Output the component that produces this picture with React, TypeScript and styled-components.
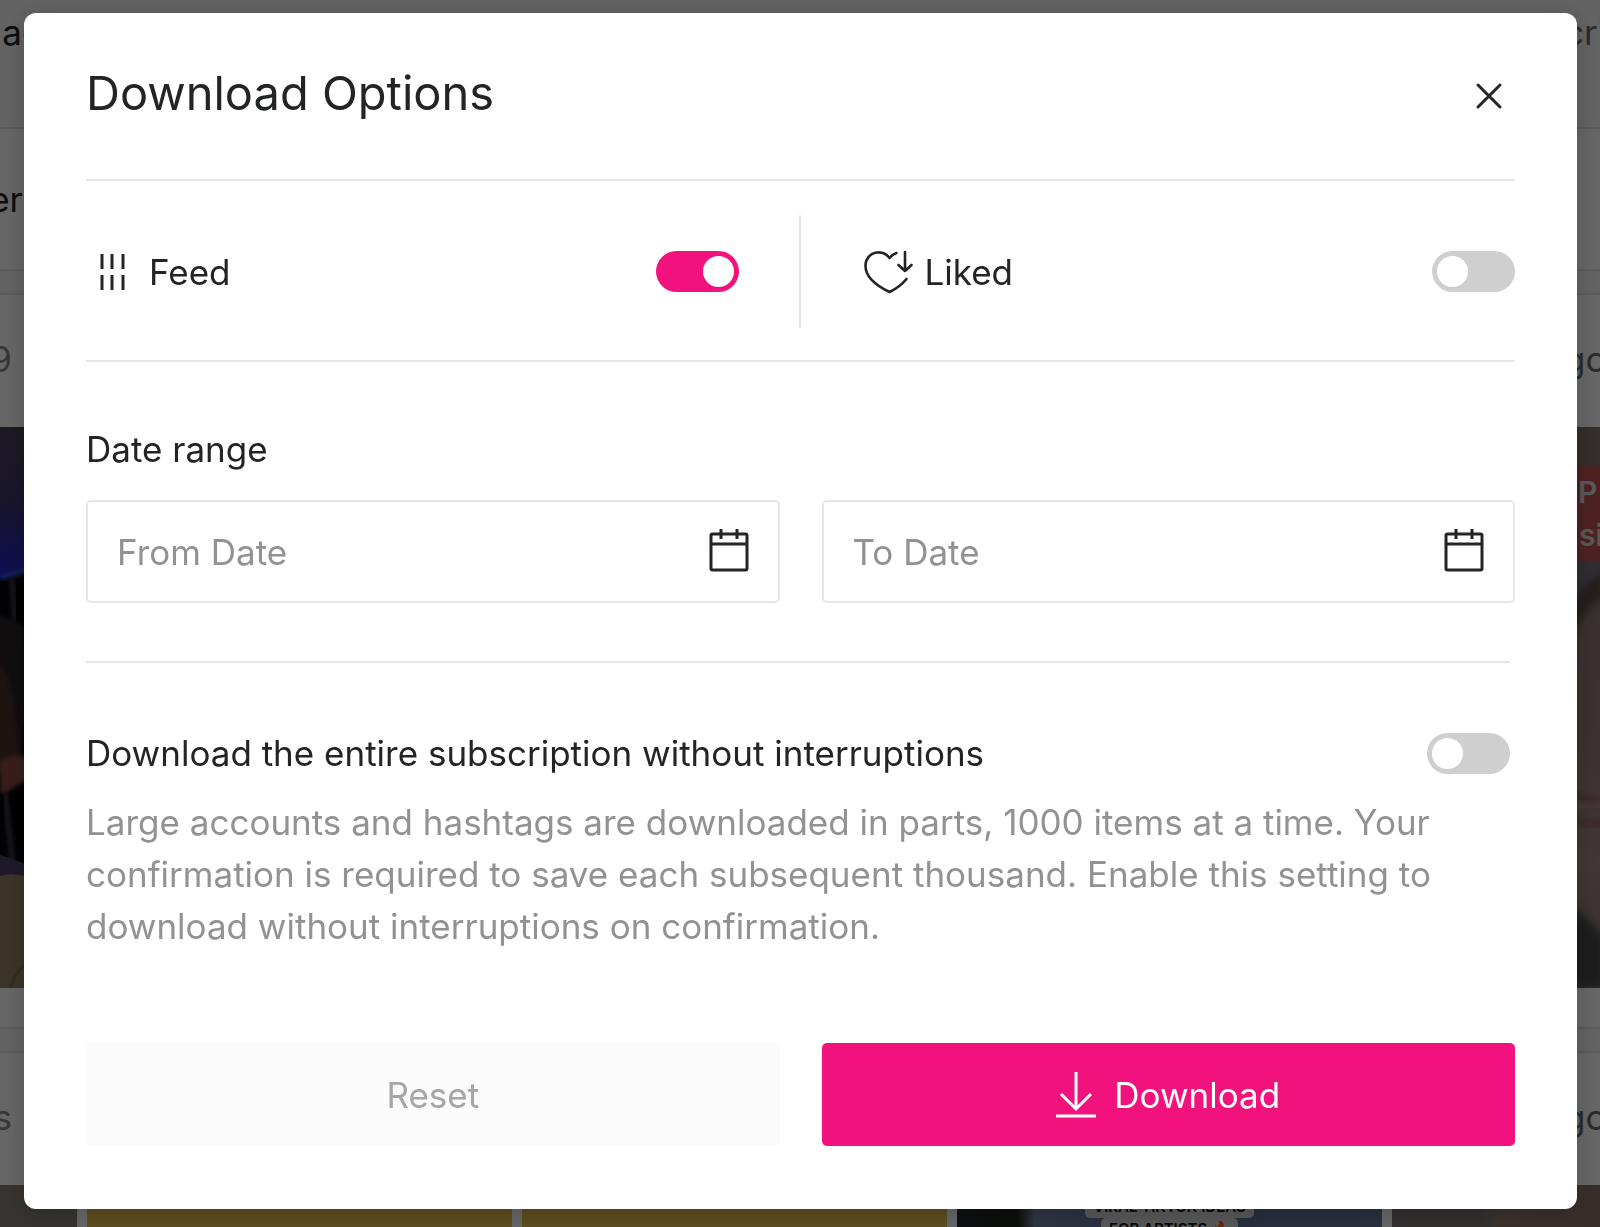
import React, { useState } from "react";
import styled, { createGlobalStyle, css } from "styled-components";

const ink = "#222425";
const muted = "#929292";
const line = "#e6e6e6";
const pink = "#f2127d";

const GlobalStyle = createGlobalStyle`
  *, *::before, *::after { box-sizing: border-box; }
  html, body, #root { height: 100%; }
  body {
    margin: 0;
    overflow: hidden;
    color: ${ink};
    font-family: Inter, "Liberation Sans", sans-serif;
    font-size: 35px;
    line-height: 52px;
  }
  button, input { font: inherit; color: inherit; }
  h1, h2, p { margin: 0; font-weight: 400; }
`;

/* ---------- page behind the dialog ---------- */

const Page = styled.div`
  height: 100vh;
  overflow: hidden;
  background: #f7f7f7;
`;

const Bar = styled.div<{ $height: number; $tone?: string }>`
  display: flex;
  justify-content: space-between;
  align-items: center;
  height: ${(p) => p.$height}px;
  border-bottom: 2px solid #e2e2e2;
  background: ${(p) => p.$tone ?? "#fff"};
`;

const TopBar = styled(Bar)`
  align-items: flex-start;
  padding-top: 6px;
`;

const LeftText = styled.span<{ $width: number; $soft?: boolean }>`
  display: flex;
  justify-content: flex-end;
  width: ${(p) => p.$width}px;
  color: ${(p) => (p.$soft ? "#8a8a8a" : ink)};
`;

const RightText = styled.span`
  width: 36px;
  white-space: nowrap;
  color: #666a70;
`;

const Card = styled.section`
  margin-top: 22px;
  border-top: 2px solid #e2e2e2;
  background: #fff;
`;

const CardHead = styled.div`
  display: flex;
  justify-content: space-between;
  align-items: center;
  height: 132px;
  padding-bottom: 4px;
`;

const Photos = styled.div<{ $wide?: boolean }>`
  display: grid;
  grid-template-columns: ${(p) => (p.$wide ? "1fr 1fr" : "77px repeat(3, 425px) 1fr")};
  gap: 10px;
  height: 561px;
  svg { display: block; width: 100%; height: 561px; }
`;

const CardFoot = styled.div`
  height: 41px;
  border-bottom: 2px solid #e2e2e2;
`;

const Swatch = styled.div<{ $fill: string }>`
  background: ${(p) => p.$fill};
`;

const Poster = styled.div`
  display: flex;
  flex-direction: column;
  align-items: center;
  padding-top: 11px;
  background: linear-gradient(90deg, #222b2e 0, #1c2218 60px, #7486a8 78px, #5e7197 45%, #64789c 100%);
`;

const PosterLine = styled.span`
  padding: 0 8px;
  border-radius: 5px;
  background: #dadada;
  color: #111;
  font-size: 15px;
  font-weight: 600;
  line-height: 22px;
`;

const Concert = () => (
  <svg viewBox="0 0 795 561" preserveAspectRatio="xMinYMin slice" aria-hidden="true">
    <defs>
      <linearGradient id="stage" x1="0" y1="0" x2="0" y2="1">
        <stop offset="0" stopColor="#4a4055" />
        <stop offset="0.5" stopColor="#40356f" />
        <stop offset="1" stopColor="#2222d8" />
      </linearGradient>
      <filter id="soft"><feGaussianBlur stdDeviation="2" /></filter>
    </defs>
    <rect width="795" height="561" fill="#050409" />
    <path d="M0 0H795V100L24 144L0 152Z" fill="url(#stage)" />
    <path d="M0 152L24 144L60 139" stroke="#2b63e6" strokeWidth="4" fill="none" filter="url(#soft)" />
    <path d="M12 152L15 195M5 366L13 440" stroke="#4c4c55" strokeWidth="4" filter="url(#soft)" />
    <path d="M-20 190Q5 184 24 200Q30 270 20 335Q5 350 -20 348Z" fill="#2c2225" filter="url(#soft)" />
    <path d="M-20 225Q5 228 13 270L20 330L0 350Z" fill="#49302a" filter="url(#soft)" />
    <path d="M0 334Q14 326 30 330V350Q12 364 0 367Z" fill="#8d4c43" filter="url(#soft)" />
    <path d="M0 428Q14 432 40 443V470H0Z" fill="#4b4068" />
    <path d="M0 449Q16 444 40 454V561H0Z" fill="#958264" />
    <path d="M11 561Q15 542 30 535" stroke="#7c6c55" strokeWidth="3" fill="none" />
  </svg>
);

const Portrait = () => (
  <svg viewBox="0 0 795 561" preserveAspectRatio="xMaxYMin slice" aria-hidden="true">
    <defs>
      <linearGradient id="skin" x1="0" y1="0" x2="0" y2="1">
        <stop offset="0" stopColor="#8a7a78" />
        <stop offset="0.4" stopColor="#957b78" />
        <stop offset="0.7" stopColor="#a58a88" />
        <stop offset="1" stopColor="#816e6c" />
      </linearGradient>
      <filter id="haze"><feGaussianBlur stdDeviation="4" /></filter>
    </defs>
    <rect width="795" height="561" fill="#82736f" />
    <rect y="134" width="795" height="70" fill="#77717d" />
    <path d="M760 205Q775 160 800 150V561H740Z" fill="url(#skin)" />
    <path d="M765 185Q775 155 800 146V170Q780 178 765 215Z" fill="#574a45" filter="url(#haze)" />
    <path d="M770 374Q785 384 800 378" stroke="#bcaaa4" strokeWidth="8" fill="none" filter="url(#haze)" />
    <path d="M765 366Q782 378 800 374M770 392Q785 400 800 396" stroke="#853f48" strokeWidth="4" fill="none" filter="url(#haze)" />
    <path d="M740 465Q775 480 800 510V561H740Z" fill="#4b494b" filter="url(#haze)" />
    <rect x="740" y="38" width="60" height="96" rx="6" fill="#c25353" />
    <text x="773" y="76" fill="#ddd" fontSize="30" fontWeight="600">P</text>
    <text x="774" y="119" fill="#ddd" fontSize="30" fontWeight="600">si</text>
  </svg>
);

/* ---------- dialog ---------- */

const Overlay = styled.div`
  position: fixed;
  inset: 0;
  display: flex;
  align-items: flex-start;
  padding: 13px 23px 18px 24px;
  background: rgba(0, 0, 0, 0.6);
`;

const Dialog = styled.form`
  flex: 1;
  padding: 0 62px 63px;
  border-radius: 12px;
  background: #fff;
  box-shadow: 0 4px 24px rgba(0, 0, 0, 0.2);
`;

const Header = styled.header`
  display: flex;
  justify-content: space-between;
  align-items: center;
  height: 168px;
  padding-bottom: 6px;
  border-bottom: 2px solid ${line};
`;

const Title = styled.h1`
  font-size: 47px;
  line-height: 56px;
`;

const IconButton = styled.button`
  display: flex;
  padding: 0;
  border: 0;
  background: none;
  cursor: pointer;
`;

const CloseButton = styled(IconButton)`
  padding: 18px 12px 12px;
`;

const Sources = styled.div`
  display: grid;
  grid-template-columns: 1fr 1fr;
  padding: 34px 0 32px;
  border-bottom: 2px solid ${line};
`;

const Source = styled.div`
  display: flex;
  align-items: center;
  gap: 11px;
  height: 113px;
  &:first-child { padding-right: 60px; border-right: 2px solid ${line}; }
  &:last-child { padding-left: 61px; }
  label { flex: 1; }
`;

const Switch = styled.input`
  flex: none;
  width: 83px;
  height: 41px;
  margin: 0;
  padding: 5px;
  appearance: none;
  border-radius: 21px;
  background: #cfcfcf;
  cursor: pointer;
  &::before {
    content: "";
    display: block;
    width: 31px;
    height: 31px;
    border-radius: 50%;
    background: #fff;
  }
  &:checked { background: ${pink}; }
  &:checked::before { margin-left: auto; }
`;

const Dates = styled.fieldset`
  min-width: 0;
  margin: 0;
  padding: 61px 0 58px;
  border: 0;
`;

const Legend = styled.legend`
  float: left;
  width: 100%;
  padding: 0;
  margin-bottom: 25px;
`;

const TwoColumns = styled.div`
  clear: both;
  display: grid;
  grid-template-columns: 1fr 1fr;
  gap: 42px;
`;

const DateField = styled.div`
  display: flex;
  align-items: center;
  height: 103px;
  padding: 0 29px;
  border: 2px solid ${line};
  border-radius: 5px;
  input {
    flex: 1;
    min-width: 0;
    padding: 0;
    border: 0;
    outline: 0;
    background: none;
  }
  input::placeholder { color: ${muted}; opacity: 1; }
  button { padding-bottom: 4px; }
`;

const Continuous = styled.section`
  margin-right: 5px;
  padding-top: 64px;
  border-top: 2px solid ${line};
`;

const Setting = styled.div`
  display: flex;
  justify-content: space-between;
  align-items: center;
  margin-bottom: 17px;
`;

const Hint = styled.p`
  margin-bottom: 91px;
  color: ${muted};
`;

const action = css`
  display: flex;
  justify-content: center;
  align-items: center;
  gap: 18px;
  height: 103px;
  border: 0;
  border-radius: 5px;
`;

const ResetButton = styled.button`
  ${action}
  background: #fbfbfb;
  color: #a6a6a6;
`;

const DownloadButton = styled.button`
  ${action}
  background: ${pink};
  color: #fff;
  cursor: pointer;
`;

const FeedIcon = () => (
  <svg width="52" height="52" viewBox="0 0 52 52" stroke={ink} strokeWidth="3" aria-hidden="true">
    <path d="M16 8V23M26 8V23M37 8V23M16 29V44M26 29V44M37 29V44" />
  </svg>
);

const LikedIcon = () => (
  <svg width="52" height="52" viewBox="0 0 52 52" fill="none" stroke={ink} strokeWidth="2.6" strokeLinecap="round" strokeLinejoin="round" aria-hidden="true">
    <path d="M34.500 7C31.500 8 29.500 9.500 27.500 12C24.500 8 20 6 15 6.500C8 7.300 3.500 13 3.500 20C3.500 31 15 40 27.500 46C34 43 40 38.500 44.500 33" />
    <path d="M43 6V24M36.500 19L43 25L49.500 19" />
  </svg>
);

const CalendarIcon = () => (
  <svg width="40" height="44" viewBox="0 0 40 44" fill="none" stroke={ink} strokeWidth="3" aria-hidden="true">
    <rect x="2" y="6" width="36" height="36" rx="1.500" />
    <path d="M2 16H38M12 1V11M28 1V11" />
  </svg>
);

const CloseIcon = () => (
  <svg width="28" height="28" viewBox="0 0 28 28" stroke={ink} strokeWidth="3" strokeLinecap="round" aria-hidden="true">
    <path d="M3 3L25 25M25 3L3 25" />
  </svg>
);

const DownloadIcon = () => (
  <svg width="40" height="48" viewBox="0 0 40 48" fill="none" stroke="#fff" strokeWidth="3" aria-hidden="true">
    <path d="M20 1V38M5 23L20 38L35 23M0 45H40" />
  </svg>
);

const DateInput = ({ id, label }: { id: string; label: string }) => (
  <DateField>
    <input id={id} type="text" placeholder={label} aria-label={label} />
    <IconButton type="button" aria-label={`Choose ${label}`}>
      <CalendarIcon />
    </IconButton>
  </DateField>
);

const Backdrop = () => (
  <Page aria-hidden="true">
    <TopBar $height={129} $tone="#f7f7f7">
      <LeftText $width={42}>ac</LeftText>
      <RightText>cri</RightText>
    </TopBar>
    <Bar $height={142}>
      <LeftText $width={44}>ern</LeftText>
    </Bar>
    <Card>
      <CardHead>
        <LeftText $width={12} $soft>9</LeftText>
        <RightText>go</RightText>
      </CardHead>
      <Photos $wide>
        <Concert />
        <Portrait />
      </Photos>
      <CardFoot />
    </Card>
    <Card>
      <CardHead>
        <LeftText $width={12} $soft>s</LeftText>
        <RightText>go</RightText>
      </CardHead>
      <Photos>
        <Swatch $fill="#88827a" />
        <Swatch $fill="linear-gradient(#d9b040 0, #f5c95a 60px)" />
        <Swatch $fill="linear-gradient(#d9b040 0, #f5c95a 60px)" />
        <Poster>
          <PosterLine>VIRAL TIKTOK IDEAS</PosterLine>
          <PosterLine>FOR ARTISTS 🔥</PosterLine>
        </Poster>
        <Swatch $fill="linear-gradient(90deg, #7d7672 0, #7d7672 90px, #947c72 110px, #8c7166 100%)" />
      </Photos>
    </Card>
  </Page>
);

export default function App() {
  const [feed, setFeed] = useState(true);
  const [liked, setLiked] = useState(false);
  const [entire, setEntire] = useState(false);

  return (
    <>
      <GlobalStyle />
      <Backdrop />
      <Overlay>
        <Dialog role="dialog" aria-labelledby="title" onSubmit={(e) => e.preventDefault()}>
          <Header>
            <Title id="title">Download Options</Title>
            <CloseButton type="button" aria-label="Close">
              <CloseIcon />
            </CloseButton>
          </Header>
          <Sources>
            <Source>
              <FeedIcon />
              <label htmlFor="feed">Feed</label>
              <Switch id="feed" type="checkbox" checked={feed} onChange={(e) => setFeed(e.target.checked)} />
            </Source>
            <Source>
              <LikedIcon />
              <label htmlFor="liked">Liked</label>
              <Switch id="liked" type="checkbox" checked={liked} onChange={(e) => setLiked(e.target.checked)} />
            </Source>
          </Sources>
          <Dates>
            <Legend>Date range</Legend>
            <TwoColumns>
              <DateInput id="from" label="From Date" />
              <DateInput id="to" label="To Date" />
            </TwoColumns>
          </Dates>
          <Continuous>
            <Setting>
              <label htmlFor="entire">Download the entire subscription without interruptions</label>
              <Switch id="entire" type="checkbox" checked={entire} onChange={(e) => setEntire(e.target.checked)} />
            </Setting>
            <Hint>
              Large accounts and hashtags are downloaded in parts, 1000 items at a time. Your
              confirmation is required to save each subsequent thousand. Enable this setting to
              download without interruptions on confirmation.
            </Hint>
          </Continuous>
          <TwoColumns>
            <ResetButton type="reset">Reset</ResetButton>
            <DownloadButton type="submit">
              <DownloadIcon />
              Download
            </DownloadButton>
          </TwoColumns>
        </Dialog>
      </Overlay>
    </>
  );
}
